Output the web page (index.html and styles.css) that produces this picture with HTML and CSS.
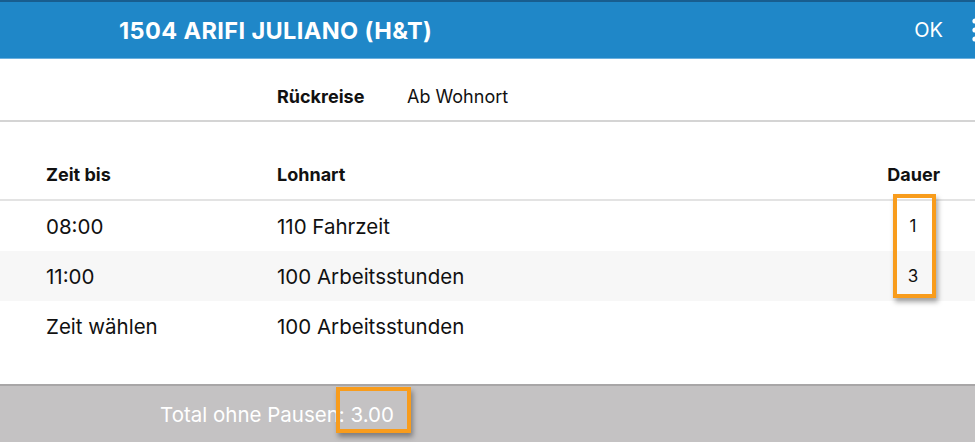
FILE: index.html
```html
<!DOCTYPE html>
<html lang="de">
<head>
<meta charset="utf-8">
<title>1504 ARIFI JULIANO (H&amp;T)</title>
<link rel="stylesheet" href="styles.css">
</head>
<body>
<div class="screen">
  <header class="topbar">
    <div class="title">1504 ARIFI JULIANO (H&amp;T)</div>
    <div class="ok">OK</div>
    <svg class="kebab" width="10" height="30" viewBox="0 0 10 30"><circle cx="5" cy="5" r="2.6" fill="#fff"/><circle cx="5" cy="14" r="2.6" fill="#fff"/><circle cx="5" cy="23" r="2.6" fill="#fff"/></svg>
  </header>
  <div class="trip">
    <span class="trip-label">Rückreise</span>
    <span class="trip-value">Ab Wohnort</span>
  </div>
  <div class="table">
    <div class="row head">
      <div>Zeit bis</div>
      <div>Lohnart</div>
      <div class="dur">Dauer</div>
    </div>
    <div class="row">
      <div>08:00</div>
      <div>110 Fahrzeit</div>
      <div class="dur">1</div>
    </div>
    <div class="row alt">
      <div>11:00</div>
      <div>100 Arbeitsstunden</div>
      <div class="dur">3</div>
    </div>
    <div class="row">
      <div>Zeit wählen</div>
      <div>100 Arbeitsstunden</div>
      <div class="dur"></div>
    </div>
  </div>
  <footer class="total">Total ohne Pausen: 3.00</footer>
  <div class="mark mark-dur"></div>
  <div class="mark mark-total"></div>
</div>
</body>
</html>
```
FILE: styles.css
```css
* { box-sizing: border-box; }
html, body { margin: 0; padding: 0; }
body {
  width: 975px;
  height: 442px;
  overflow: hidden;
  background: #fff;
  font-family: Inter, "Noto Sans", "Liberation Sans", sans-serif;
  color: #111;
}
.screen {
  position: relative;
  width: 975px;
  height: 442px;
  display: flex;
  flex-direction: column;
}
.topbar {
  height: 59px;
  background: #1f87c8;
  border-top: 2px solid #185d8f;
  border-bottom: 1px solid #6bb0de;
  display: flex;
  align-items: center;
  padding-left: 119px;
  color: #fff;
}
.title {
  font-size: 23.5px;
  font-weight: 700;
  letter-spacing: 0.4px;
  flex: 1;
}
.ok {
  font-size: 20px;
  margin-right: 27px;
}
.kebab {
  margin-right: -5px;
  margin-top: 1px;
}
.trip {
  height: 63px;
  display: flex;
  align-items: center;
  padding-left: 277px;
  padding-top: 14px;
  font-size: 18px;
  border-bottom: 2px solid #d4d4d4;
}
.trip-label { font-weight: 700; width: 130px; }
.table {
  display: flex;
  flex-direction: column;
}
.row {
  display: grid;
  grid-template-columns: 231px 1fr 54px;
  align-items: center;
  padding: 0 35px 0 46px;
  height: 50px;
  font-size: 20.5px;
}
.row.head {
  height: 79px;
  padding-top: 27px;
  font-size: 18px;
  font-weight: 700;
  border-bottom: 2px solid #e3e3e3;
}
.row.alt { background: #f7f7f7; }
.dur { text-align: center; }
.row .dur { font-size: 17px; }
.row.head .dur { text-align: right; font-size: 18px; }
.total {
  margin-top: auto;
  height: 58px;
  background: #c4c2c3;
  border-top: 2px solid #a8a6a7;
  color: #fff;
  font-size: 20.5px;
  display: flex;
  align-items: center;
  padding-left: 160px;
}
.mark {
  position: absolute;
  border: 4px solid #f89c1c;
  box-shadow: 2px 4px 5px rgba(0, 0, 0, 0.35);
}
.mark-dur { left: 893px; top: 194px; width: 43px; height: 104px; }
.mark-total { left: 336px; top: 387px; width: 75px; height: 46px; }
```
